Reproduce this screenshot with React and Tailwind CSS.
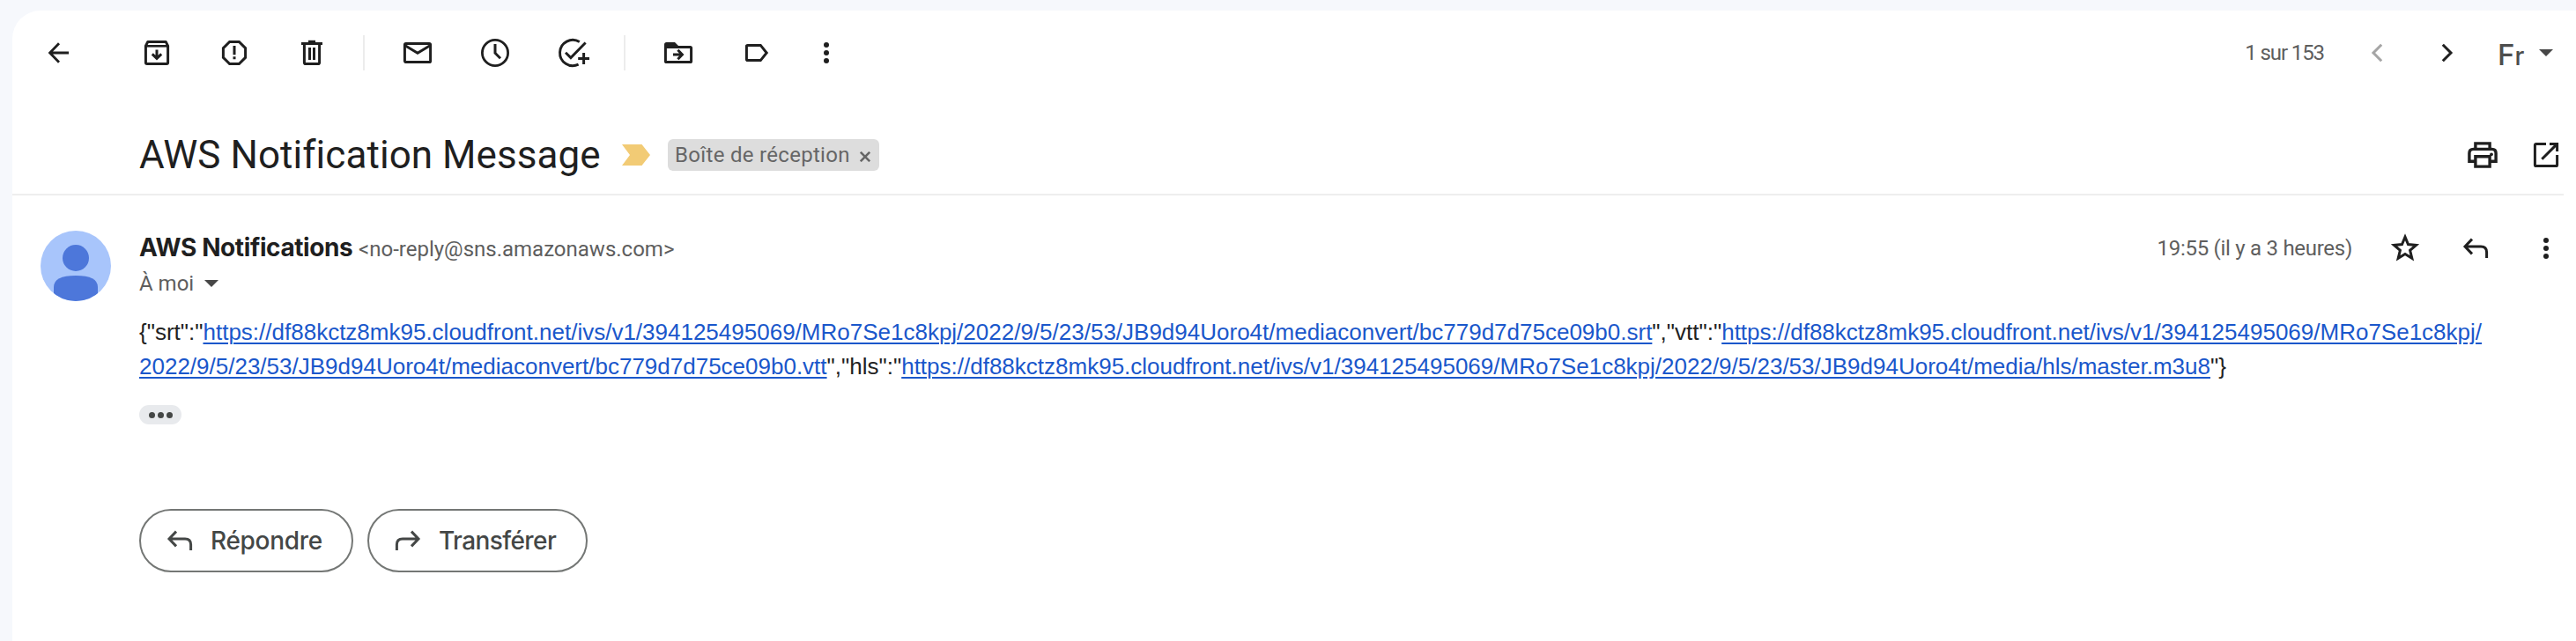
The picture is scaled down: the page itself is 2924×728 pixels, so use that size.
import React from "react";

function Glyph({ children, w = 40, className = "" }) {
  return (
    <svg
      width={w}
      height="40"
      viewBox={`0 0 ${w} 40`}
      fill="none"
      stroke="currentColor"
      strokeWidth="3"
      className={`shrink-0 ${className}`}
    >
      {children}
    </svg>
  );
}

function Back() {
  return (
    <Glyph>
      <path d="M32 20H11M21 9.2 10.6 20 21 30.8" strokeWidth="2.8" />
    </Glyph>
  );
}

function Archive() {
  return (
    <Glyph>
      <path d="M7.4 12.2 9.8 7.4h20.4l2.4 4.8v18.9q0 1.5-1.5 1.5H8.9q-1.5 0-1.5-1.5z" strokeLinejoin="round" />
      <path d="M7 12.3h26" strokeWidth="2.6" />
      <path d="M20 16.5v9M14.8 21.4 20 26.4l5.2-5" />
    </Glyph>
  );
}

function Spam() {
  return (
    <Glyph>
      <path d="M14.6 7.4h10.8l7.2 7.2v10.8l-7.2 7.2H14.6l-7.2-7.2V14.6z" />
      <path d="M20 12v10.2M20 24.3v3" />
    </Glyph>
  );
}

function Trash() {
  return (
    <Glyph>
      <path d="M8 9.5h24" />
      <path d="M16 7h8" strokeWidth="2.4" />
      <path d="M11.4 10v20.9q0 1.6 1.6 1.6h14q1.6 0 1.6-1.6V10M17.5 14v14M22.5 14v14" />
    </Glyph>
  );
}

function Mail() {
  return (
    <Glyph>
      <rect x="5.4" y="9.4" width="29.2" height="21.2" rx="1.4" />
      <path d="M5.5 11.5 20 20.3l14.5-8.8" />
    </Glyph>
  );
}

function Clock() {
  return (
    <Glyph>
      <circle cx="20" cy="20" r="14.6" strokeWidth="2.8" />
      <path d="M20 10v10.2l6 6" />
    </Glyph>
  );
}

function AddTask() {
  return (
    <Glyph>
      <path d="M27.8 7.6A14.6 14.6 0 1 0 26.6 33.1" strokeWidth="2.9" />
      <path d="m12 19.7 5.9 5.9L34.6 8.4" strokeWidth="2.9" />
      <path d="M26.2 26.5h12.8M32.6 20v13" />
    </Glyph>
  );
}

function MoveTo() {
  return (
    <Glyph>
      <rect x="5.4" y="13.4" width="29.2" height="17.2" rx="1.2" />
      <path d="M4 15V10.5Q4 8 6.5 8H16l4 4v3z" fill="currentColor" stroke="none" />
      <path d="M14 22h10M19.4 16.8l5 5.2-5 5.2" />
    </Glyph>
  );
}

function Label() {
  return (
    <Glyph>
      <path d="M9.4 12.7q0-1.3 1.3-1.3H25.3L32.2 20l-6.9 8.6H10.7q-1.3 0-1.3-1.3z" />
    </Glyph>
  );
}

function More() {
  return (
    <Glyph>
      <g fill="currentColor" stroke="none">
        <circle cx="20" cy="11" r="3" />
        <circle cx="20" cy="20" r="3" />
        <circle cx="20" cy="29" r="3" />
      </g>
    </Glyph>
  );
}

function Print() {
  return (
    <Glyph>
      <g strokeWidth="3.4">
        <path d="M11.9 15V6.9h16.2V15M11.9 27.2H4.9V18q0-4.6 4.6-4.6h21q4.6 0 4.6 4.6v9.2h-7" />
        <path d="M11.9 21.8h16.2v11.3H11.9z" />
      </g>
      <circle cx="30" cy="19.3" r="1.9" fill="currentColor" stroke="none" />
    </Glyph>
  );
}

function OpenNew() {
  return (
    <Glyph>
      <path d="M20 7.4H8.8Q7.4 7.4 7.4 8.8v22.4q0 1.4 1.4 1.4h22.4q1.4 0 1.4-1.4V20" />
      <path d="M24 7.4h8.6V16M32.4 7.6 15.3 24.7" />
    </Glyph>
  );
}

function Star() {
  return (
    <Glyph>
      <path
        d="m20 7.2 3.5 8.4 9 .8-6.9 5.9 2.2 9L20 26.5l-7.8 4.8 2.2-9-6.9-5.900 9-.8z"
        strokeWidth="3"
      />
    </Glyph>
  );
}

function Reply({ className }) {
  return (
    <Glyph className={className}>
      <path d="M16 9.6 8 18l8 8.4M8 18h18q6.6 0 6.6 6.6V31" />
    </Glyph>
  );
}

function Caret({ className = "" }) {
  return (
    <svg width="16" height="8" viewBox="0 0 16 8" className={`shrink-0 ${className}`}>
      <path d="M0 0h16L8 8z" fill="#474747" />
    </svg>
  );
}

function Link({ children }) {
  return (
    <a className="text-[#1a57cb] underline decoration-2 underline-offset-[3px]">{children}</a>
  );
}

function Separator() {
  return <div className="mr-10 ml-[38px] h-10 w-0.5 bg-[#ececec]" />;
}

export default function App() {
  return (
    <div className="h-[728px] w-[2924px] overflow-hidden bg-[#f6f8fc] pt-3 pl-3.5 font-['Roboto',sans-serif] text-[#1f1f1f]">
      <div className="h-[716px] rounded-tl-[32px] bg-white">
        <div className="flex h-24 items-center justify-between pr-[26px] pl-8">
          <div className="flex items-center">
            <Back />
            <div className="ml-[72px] flex gap-12">
              <Archive />
              <Spam />
              <Trash />
            </div>
            <Separator />
            <div className="flex gap-12">
              <Mail />
              <Clock />
              <AddTask />
            </div>
            <Separator />
            <div className="flex gap-12">
              <MoveTo />
              <Label />
            </div>
            <div className="ml-10">
              <More />
            </div>
          </div>
          <div className="flex items-center">
            <span className="mr-10 text-2xl tracking-[-1.1px] text-[#5e5e5e]">1 sur 153</span>
            <Glyph className="mr-10 text-[#a5a5a5]">
              <path d="M25.2 10.8 16 20l9.2 9.2" />
            </Glyph>
            <Glyph className="mr-[37px]">
              <path d="M14.8 10.8 24 20l-9.2 9.2" />
            </Glyph>
            <span className="mt-1.5 mr-3 w-[35px] font-['Inter',sans-serif] text-[33px] leading-10 font-medium text-[#4d4d4d]">
              F<span className="text-[28px]">r</span>
            </span>
            <Caret />
          </div>
        </div>

        <div className="mt-6 mr-3.5 flex h-[90px] items-center border-b-2 border-[#eeeeee] pl-36">
          <h1 className="w-[548px] text-[44px] leading-[52px] tracking-[0.05px] whitespace-nowrap">
            AWS Notification Message
          </h1>
          <svg width="32" height="24" viewBox="0 0 32 24" className="shrink-0">
            <path d="M0 0h22.5L32 12l-9.5 12H0l9-12z" fill="#f2cb75" />
          </svg>
          <div className="ml-5 flex h-9 w-60 items-center rounded-md bg-[#dddddd] pl-2 text-2xl text-[#666666]">
            <span className="w-[210px] tracking-[0.3px] whitespace-nowrap">Boîte de réception</span>
            <svg width="12" height="12" viewBox="0 0 12 12" stroke="currentColor" strokeWidth="2.6" className="mt-1">
              <path d="m.8.8 10.4 10.4M11.2.8.8 11.2" />
            </svg>
          </div>
          <div className="ml-auto flex gap-8">
            <Print />
            <OpenNew />
          </div>
        </div>

        <div className="mt-10 flex pl-8">
          <svg width="80" height="80" viewBox="0 0 80 80" className="shrink-0">
            <clipPath id="avatar">
              <circle cx="40" cy="40" r="40" />
            </clipPath>
            <g clipPath="url(#avatar)">
              <path d="M0 0h80v80H0z" fill="#a8c5fb" />
              <circle cx="40" cy="31" r="15" fill="#4d77da" />
              <path d="M15 80V64q0-13 25-13t25 13v16z" fill="#4d77da" />
            </g>
          </svg>

          <div className="ml-8 flex-1">
            <div className="flex h-10 items-center justify-between pr-3.5">
              <div className="flex items-baseline pb-0.5 whitespace-nowrap">
                <span className="w-[249px] font-['Inter',sans-serif] text-[28px] leading-[38px] font-bold tracking-[-0.4px]">
                  AWS Notifications
                </span>
                <span className="text-2xl text-[#5e5e5e]">&lt;no-reply@sns.amazonaws.com&gt;</span>
              </div>
              <div className="flex items-center">
                <span className="mr-10 text-2xl tracking-[-0.28px] text-[#5e5e5e]">19:55 (il y a 3 heures)</span>
                <div className="flex gap-10">
                  <Star />
                  <Reply />
                  <More />
                </div>
              </div>
            </div>

            <div className="flex h-10 items-center text-2xl text-[#5e5e5e]">
              <span className="w-[74px]">À moi</span>
              <Caret />
            </div>

            <div className="mt-4 font-['Liberation_Sans',Arial,sans-serif] text-[26px] leading-[39px] whitespace-nowrap text-[#222222]">
              <div>
                {'{"srt":"'}
                <Link>
                  https://df88kctz8mk95.cloudfront.net/ivs/v1/394125495069/MRo7Se1c8kpj/2022/9/5/23/53/JB9d94Uoro4t/mediaconvert/bc779d7d75ce09b0.srt
                </Link>
                {'","vtt":"'}
                <Link>https://df88kctz8mk95.cloudfront.net/ivs/v1/394125495069/MRo7Se1c8kpj/</Link>
              </div>
              <div>
                <Link>2022/9/5/23/53/JB9d94Uoro4t/mediaconvert/bc779d7d75ce09b0.vtt</Link>
                {'","hls":"'}
                <Link>
                  https://df88kctz8mk95.cloudfront.net/ivs/v1/394125495069/MRo7Se1c8kpj/2022/9/5/23/53/JB9d94Uoro4t/media/hls/master.m3u8
                </Link>
                {'"}'}
              </div>
            </div>

            <div className="mt-6 flex h-[22px] w-12 items-center justify-center gap-[3px] rounded-full bg-[#e8eaed]">
              <span className="size-[7px] rounded-full bg-[#444746]" />
              <span className="size-[7px] rounded-full bg-[#444746]" />
              <span className="size-[7px] rounded-full bg-[#444746]" />
            </div>

            <div className="mt-24 flex gap-4 font-['Inter',sans-serif] text-[28px] font-medium text-[#444746]">
              <button className="flex h-[72px] w-[243px] items-center rounded-full border-2 border-[#747775] pl-6">
                <Reply />
                <span className="ml-[15px] tracking-[-0.3px]">Répondre</span>
              </button>
              <button className="flex h-[72px] w-[250px] items-center rounded-full border-2 border-[#747775] pl-6">
                <Reply className="-scale-x-100" />
                <span className="ml-[15px] tracking-[-0.6px]">Transférer</span>
              </button>
            </div>
          </div>
        </div>
      </div>
    </div>
  );
}
